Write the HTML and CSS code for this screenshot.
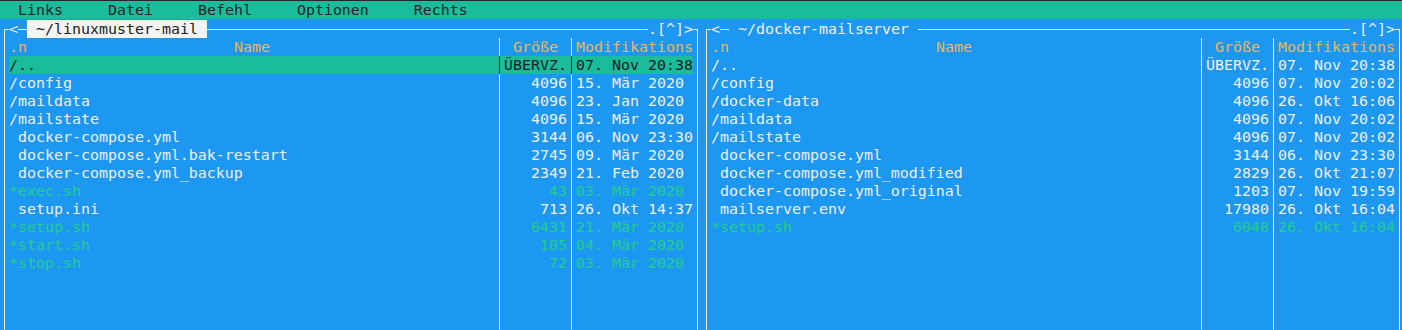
FILE: index.html
```html
<!DOCTYPE html>
<html lang="de">
<head>
<meta charset="utf-8">
<title>mc</title>
<link rel="stylesheet" href="styles.css">
</head>
<body>
<div class="term">
  <div class="menubar">
    <span>Links</span><span>Datei</span><span>Befehl</span><span>Optionen</span><span>Rechts</span>
  </div>
  <div class="panels">
    <section class="panel">
      <div class="frame">
        <div class="title"><span class="tb">&lt;</span><span class="dash"></span><span class="path active"> ~/linuxmuster-mail </span><span class="fill-line"></span><span class="tb">.[^]&gt;</span></div>
        <div class="row hdr"><span class="name-h"><span>.n</span><span>Name</span><span></span></span><span class="sep"></span><span class="size-h">Größe</span><span class="sep"></span><span>Modifikations</span></div>
        <div class="row hl"><span>/..</span><span class="sep"></span><span class="size">ÜBERVZ.</span><span class="sep"></span><span>07. Nov 20:38</span></div>
        <div class="row"><span>/config</span><span class="sep"></span><span class="size">4096</span><span class="sep"></span><span>15. Mär 2020</span></div>
        <div class="row"><span>/maildata</span><span class="sep"></span><span class="size">4096</span><span class="sep"></span><span>23. Jan 2020</span></div>
        <div class="row"><span>/mailstate</span><span class="sep"></span><span class="size">4096</span><span class="sep"></span><span>15. Mär 2020</span></div>
        <div class="row"><span> docker-compose.yml</span><span class="sep"></span><span class="size">3144</span><span class="sep"></span><span>06. Nov 23:30</span></div>
        <div class="row"><span> docker-compose.yml.bak-restart</span><span class="sep"></span><span class="size">2745</span><span class="sep"></span><span>09. Mär 2020</span></div>
        <div class="row"><span> docker-compose.yml_backup</span><span class="sep"></span><span class="size">2349</span><span class="sep"></span><span>21. Feb 2020</span></div>
        <div class="row exe"><span>*exec.sh</span><span class="sep"></span><span class="size">43</span><span class="sep"></span><span>03. Mär 2020</span></div>
        <div class="row"><span> setup.ini</span><span class="sep"></span><span class="size">713</span><span class="sep"></span><span>26. Okt 14:37</span></div>
        <div class="row exe"><span>*setup.sh</span><span class="sep"></span><span class="size">6431</span><span class="sep"></span><span>21. Mär 2020</span></div>
        <div class="row exe"><span>*start.sh</span><span class="sep"></span><span class="size">105</span><span class="sep"></span><span>04. Mär 2020</span></div>
        <div class="row exe"><span>*stop.sh</span><span class="sep"></span><span class="size">72</span><span class="sep"></span><span>03. Mär 2020</span></div>
        <div class="row fill"><span></span><span class="sep"></span><span></span><span class="sep"></span><span></span></div>
      </div>
    </section>
    <section class="panel">
      <div class="frame">
        <div class="title"><span class="tb">&lt;</span><span class="dash"></span><span class="path"> ~/docker-mailserver </span><span class="fill-line"></span><span class="tb">.[^]&gt;</span></div>
        <div class="row hdr"><span class="name-h"><span>.n</span><span>Name</span><span></span></span><span class="sep"></span><span class="size-h">Größe</span><span class="sep"></span><span>Modifikations</span></div>
        <div class="row"><span>/..</span><span class="sep"></span><span class="size">ÜBERVZ.</span><span class="sep"></span><span>07. Nov 20:38</span></div>
        <div class="row"><span>/config</span><span class="sep"></span><span class="size">4096</span><span class="sep"></span><span>07. Nov 20:02</span></div>
        <div class="row"><span>/docker-data</span><span class="sep"></span><span class="size">4096</span><span class="sep"></span><span>26. Okt 16:06</span></div>
        <div class="row"><span>/maildata</span><span class="sep"></span><span class="size">4096</span><span class="sep"></span><span>07. Nov 20:02</span></div>
        <div class="row"><span>/mailstate</span><span class="sep"></span><span class="size">4096</span><span class="sep"></span><span>07. Nov 20:02</span></div>
        <div class="row"><span> docker-compose.yml</span><span class="sep"></span><span class="size">3144</span><span class="sep"></span><span>06. Nov 23:30</span></div>
        <div class="row"><span> docker-compose.yml_modified</span><span class="sep"></span><span class="size">2829</span><span class="sep"></span><span>26. Okt 21:07</span></div>
        <div class="row"><span> docker-compose.yml_original</span><span class="sep"></span><span class="size">1203</span><span class="sep"></span><span>07. Nov 19:59</span></div>
        <div class="row"><span> mailserver.env</span><span class="sep"></span><span class="size">17980</span><span class="sep"></span><span>26. Okt 16:04</span></div>
        <div class="row exe"><span>*setup.sh</span><span class="sep"></span><span class="size">6048</span><span class="sep"></span><span>26. Okt 16:04</span></div>
        <div class="row fill"><span></span><span class="sep"></span><span></span><span class="sep"></span><span></span></div>
      </div>
    </section>
  </div>
</div>
</body>
</html>
```

FILE: styles.css
```css
html, body {
  margin: 0;
  height: 330px;
  overflow: hidden;
  background: #1d98f2;
}

.term {
  font-family: "DejaVu Sans Mono", monospace;
  font-size: 14.95px;
  line-height: 18px;
  width: 1404px;
  border-top: 1px solid #262626;
}

.menubar {
  display: flex;
  gap: 45px;
  height: 18px;
  padding-left: 18px;
  background: #1abc9c;
  color: #262626;
}

.panels {
  display: flex;
  padding-top: 1px;
}

.panel {
  flex: none;
  width: 702px;
}

.frame {
  --line: #ececec;
  display: flex;
  flex-direction: column;
  height: 301px;
  margin: 9px 4px 0;
  border: 1px solid #ececec;
  border-bottom: none;
  color: #eeeeee;
}

.title {
  display: flex;
  flex: none;
  width: 684px;
  height: 18px;
  margin: -10px 0 0 4px;
}

.tb,
.path,
.row span {
  white-space: pre;
}

.tb {
  background: #1d98f2;
  color: #eeeeee;
}

.dash {
  width: 9px;
}

.fill-line {
  flex: 1;
}

.path {
  background: #1d98f2;
  color: #eeeeee;
}

.path.active {
  background: #f4f4f4;
  color: #222222;
}

.row {
  display: grid;
  grid-template-columns: 486px 9px 63px 9px 117px;
  flex: none;
  width: 684px;
  height: 18px;
  margin-left: 4px;
  overflow: hidden;
}

.row.fill {
  flex: 1 1 auto;
  height: auto;
}

.hdr {
  color: #e8b45e;
}

.name-h {
  display: grid;
  grid-template-columns: 1fr auto 1fr;
}

.size-h {
  text-align: center;
}

.size {
  text-align: right;
}

.sep {
  background: linear-gradient(var(--line), var(--line)) no-repeat 4px 0 / 1px 100%;
}

.hl {
  --line: #1e1e1e;
  background: #1abc9c;
  color: #1e1e1e;
}

.exe {
  color: #20cf8c;
}
```
